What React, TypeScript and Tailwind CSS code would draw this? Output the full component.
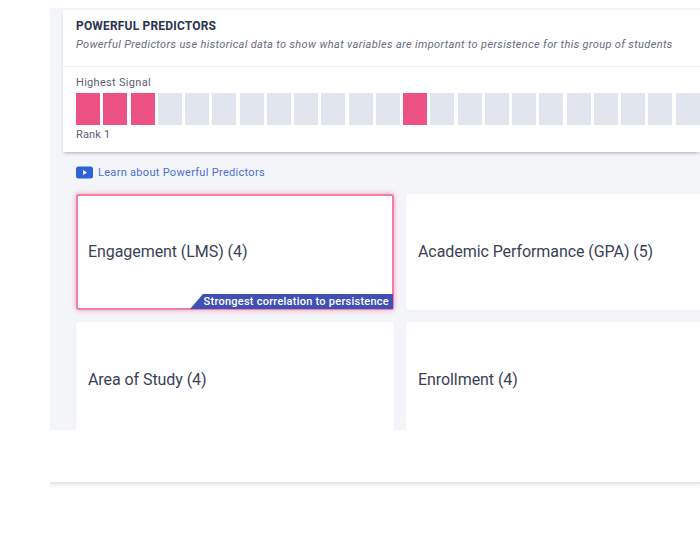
import React from "react";

const pink = [0, 1, 2, 12];

function Card({ label, active }: { label: string; active?: boolean }) {
  return (
    <div
      className={
        active
          ? "relative h-[116px] w-[318px] shrink-0 flex items-center rounded-[3px] bg-white border-2 border-[#ef7fa6] shadow-[0_0_5px_rgba(236,80,130,0.55)] pl-[10px]"
          : "relative h-[116px] w-[318px] shrink-0 flex items-center rounded-[3px] bg-white shadow-[0_1px_2px_rgba(40,50,90,0.05)] pl-[12px]"
      }
    >
      <span className="text-[16px] leading-[20px] text-[#3a3f58] tracking-[-0.07px]">{label}</span>
      {active && (
        <div className="absolute right-[-1px] bottom-[-1px] h-[15px] w-[203px] bg-[#3f51b5] [clip-path:polygon(13px_0,100%_0,100%_100%,0_100%)] flex items-center justify-end pr-[4px]">
          <span className="text-[11px] leading-[14px] font-medium text-white tracking-[0.25px] whitespace-nowrap">
            Strongest correlation to persistence
          </span>
        </div>
      )}
    </div>
  );
}

export default function App() {
  return (
    <div className="w-[700px] h-[550px] bg-white overflow-hidden pl-[50px] pt-[8px] font-['Roboto',sans-serif]">
      <div className="w-[650px] h-[422px] overflow-hidden bg-[#f4f5f9] pl-[13px] pt-[2px]">
        <div className="w-[637px] h-[142px] bg-white shadow-[0_2px_3px_-1px_rgba(40,50,80,0.35)]">
          <div className="h-[57px] pl-[13px] pt-[9px] border-b-[1.5px] border-[#eef0f5]">
            <div className="text-[12px] leading-[14px] font-bold text-[#2c3350] tracking-[0.18px]">POWERFUL PREDICTORS</div>
            <div className="mt-[5px] text-[11px] leading-[14px] italic text-[#666b80] tracking-[0.35px] whitespace-nowrap">
              Powerful Predictors use historical data to show what variables are important to persistence for this group of students
            </div>
          </div>
          <div className="pl-[13px] pt-[10px]">
            <div className="text-[11px] leading-[12px] text-[#5c6072] tracking-[0.3px]">Highest Signal</div>
            <div className="mt-[4px] flex gap-[3.25px]">
              {Array.from({ length: 23 }, (_, i) => (
                <div
                  key={i}
                  className={pink.includes(i) ? "w-[24px] h-[32px] shrink-0 bg-[#ec5284]" : "w-[24px] h-[32px] shrink-0 bg-[#e1e5ee]"}
                />
              ))}
            </div>
            <div className="mt-[4px] text-[11px] leading-[12px] text-[#5c6072] tracking-[0.15px]">Rank 1</div>
          </div>
        </div>
        <div className="pl-[13px] pt-[14px] flex items-center gap-[5px]">
          <svg width="17" height="13" viewBox="0 0 17 13" className="shrink-0">
            <rect width="17" height="12" y="0.5" rx="2.5" fill="#2f62d9" />
            <path d="M7 4 L11 6.5 L7 9 Z" fill="#ffffff" />
          </svg>
          <span className="text-[11px] leading-[13px] text-[#4a6fd8] tracking-[0.3px]">Learn about Powerful Predictors</span>
        </div>
        <div className="pl-[13px] pt-[15px] flex gap-[12px] w-[700px]">
          <Card label="Engagement (LMS) (4)" active />
          <Card label="Academic Performance (GPA) (5)" />
        </div>
        <div className="pl-[13px] pt-[12px] flex gap-[12px] w-[700px]">
          <Card label="Area of Study (4)" />
          <Card label="Enrollment (4)" />
        </div>
      </div>
      <div className="mt-[52px] w-[650px] h-[2px] bg-[#e6e7ea] shadow-[0_2px_3px_rgba(40,50,80,0.1)]" />
    </div>
  );
}
